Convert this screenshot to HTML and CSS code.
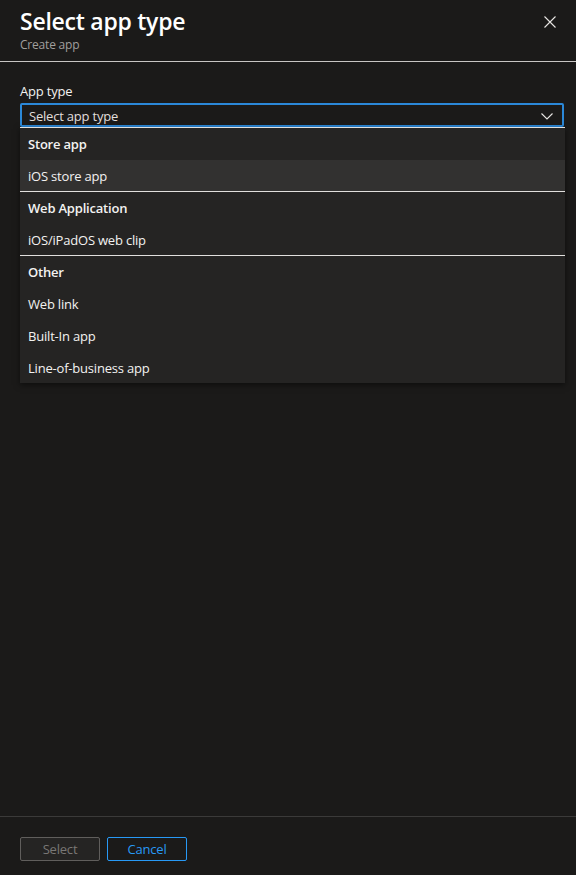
FILE: index.html
```html
<!DOCTYPE html>
<html>
<head>
<meta charset="utf-8">
<link rel="stylesheet" href="styles.css">
</head>
<body>
<div class="panel">
  <header class="head">
    <div class="titles">
      <h1 class="title">Select app type</h1>
      <div class="subtitle">Create app</div>
    </div>
    <button class="close" aria-label="Close">
      <svg width="12" height="12" viewBox="0 0 12 12"><path d="M0.5 0.5L11.5 11.5M11.5 0.5L0.5 11.5" stroke="#e8e6e4" stroke-width="1.1" fill="none"/></svg>
    </button>
  </header>
  <main class="content">
    <div class="label">App type</div>
    <div class="field">
      <div class="select">
        <span>Select app type</span>
        <svg class="chev" width="12" height="7" viewBox="0 0 12 7"><path d="M0.5 0.5L6 6L11.5 0.5" stroke="#e8e6e4" stroke-width="1.1" fill="none"/></svg>
      </div>
      <div class="menu">
        <div class="group">
          <div class="ghead">Store app</div>
          <div class="opt hover">iOS store app</div>
        </div>
        <div class="group">
          <div class="ghead">Web Application</div>
          <div class="opt">iOS/iPadOS web clip</div>
        </div>
        <div class="group last">
          <div class="ghead">Other</div>
          <div class="opt">Web link</div>
          <div class="opt">Built-In app</div>
          <div class="opt">Line-of-business app</div>
        </div>
      </div>
    </div>
  </main>
  <footer class="foot">
    <button class="btn disabled">Select</button>
    <button class="btn primary">Cancel</button>
  </footer>
</div>
</body>
</html>
```
FILE: styles.css
```css
* { box-sizing: border-box; }
html, body { margin: 0; padding: 0; }
body {
  background: #1b1a19;
  color: #f3f2f1;
  font-family: "Open Sans", "Noto Sans", sans-serif;
  font-size: 13px;
}
.panel {
  width: 576px;
  height: 875px;
  display: flex;
  flex-direction: column;
}
.head {
  display: flex;
  justify-content: space-between;
  align-items: flex-start;
  padding: 5px 20px 0 20px;
  height: 62px;
  border-bottom: 1px solid #c8c6c4;
}
.title {
  margin: 0;
  font-size: 23px;
  font-weight: 600;
  line-height: 32px;
  color: #ffffff;
  letter-spacing: -0.25px;
}
.subtitle {
  font-size: 12px;
  line-height: 16px;
  color: #a19f9d;
  margin-top: 0px;
  letter-spacing: -0.2px;
}
.close {
  background: none;
  border: 0;
  padding: 0;
  margin: 10px -1px 0 0;
  width: 14px;
  height: 14px;
  display: flex;
  align-items: center;
  justify-content: center;
}
.content {
  flex: 1;
  padding: 20px 12px 0 20px;
}
.label {
  font-size: 13px;
  line-height: 18px;
  color: #f3f2f1;
  margin-bottom: 3px;
  letter-spacing: -0.2px;
}
.field { position: relative; }
.select {
  height: 24px;
  border: 2px solid #2b88d8;
  border-radius: 2px;
  display: flex;
  align-items: center;
  justify-content: space-between;
  padding: 2px 9px 0 7px;
  color: #e1dfdd;
  letter-spacing: -0.2px;
}
.select span { line-height: 19px; }
.chev { margin-top: 0; }
.menu {
  position: absolute;
  left: 0;
  right: -1px;
  top: 24px;
  background: #252423;
  border-top: 1px solid #e1dfdd;
  box-shadow: 0 2px 6px rgba(0,0,0,0.5);
  letter-spacing: -0.2px;
}
.group { border-bottom: 1px solid #e1dfdd; }
.group.last { border-bottom: 0; }
.ghead, .opt {
  height: 32px;
  line-height: 32px;
  padding: 0 8px;
  color: #f3f2f1;
}
.opt { line-height: 32px; }
.group .opt:last-child { height: 31px; }
.group.last .opt:last-child { height: 31px; }
.ghead { font-weight: 600; }
.opt.hover { background: #323130; }
.foot {
  border-top: 1px solid #3b3a39;
  height: 59px;
  padding: 20px 20px 0 20px;
  display: flex;
  gap: 7px;
}
.btn {
  width: 80px;
  height: 24px;
  background: transparent;
  border-radius: 2px;
  font-family: "Open Sans", "Noto Sans", sans-serif;
  font-size: 13px;
  letter-spacing: -0.2px;
  padding: 0;
}
.btn.disabled {
  border: 1px solid #605e5c;
  color: #797775;
  background: #252423;
}
.btn.primary {
  border: 1px solid #2899f5;
  color: #2899f5;
}
```
